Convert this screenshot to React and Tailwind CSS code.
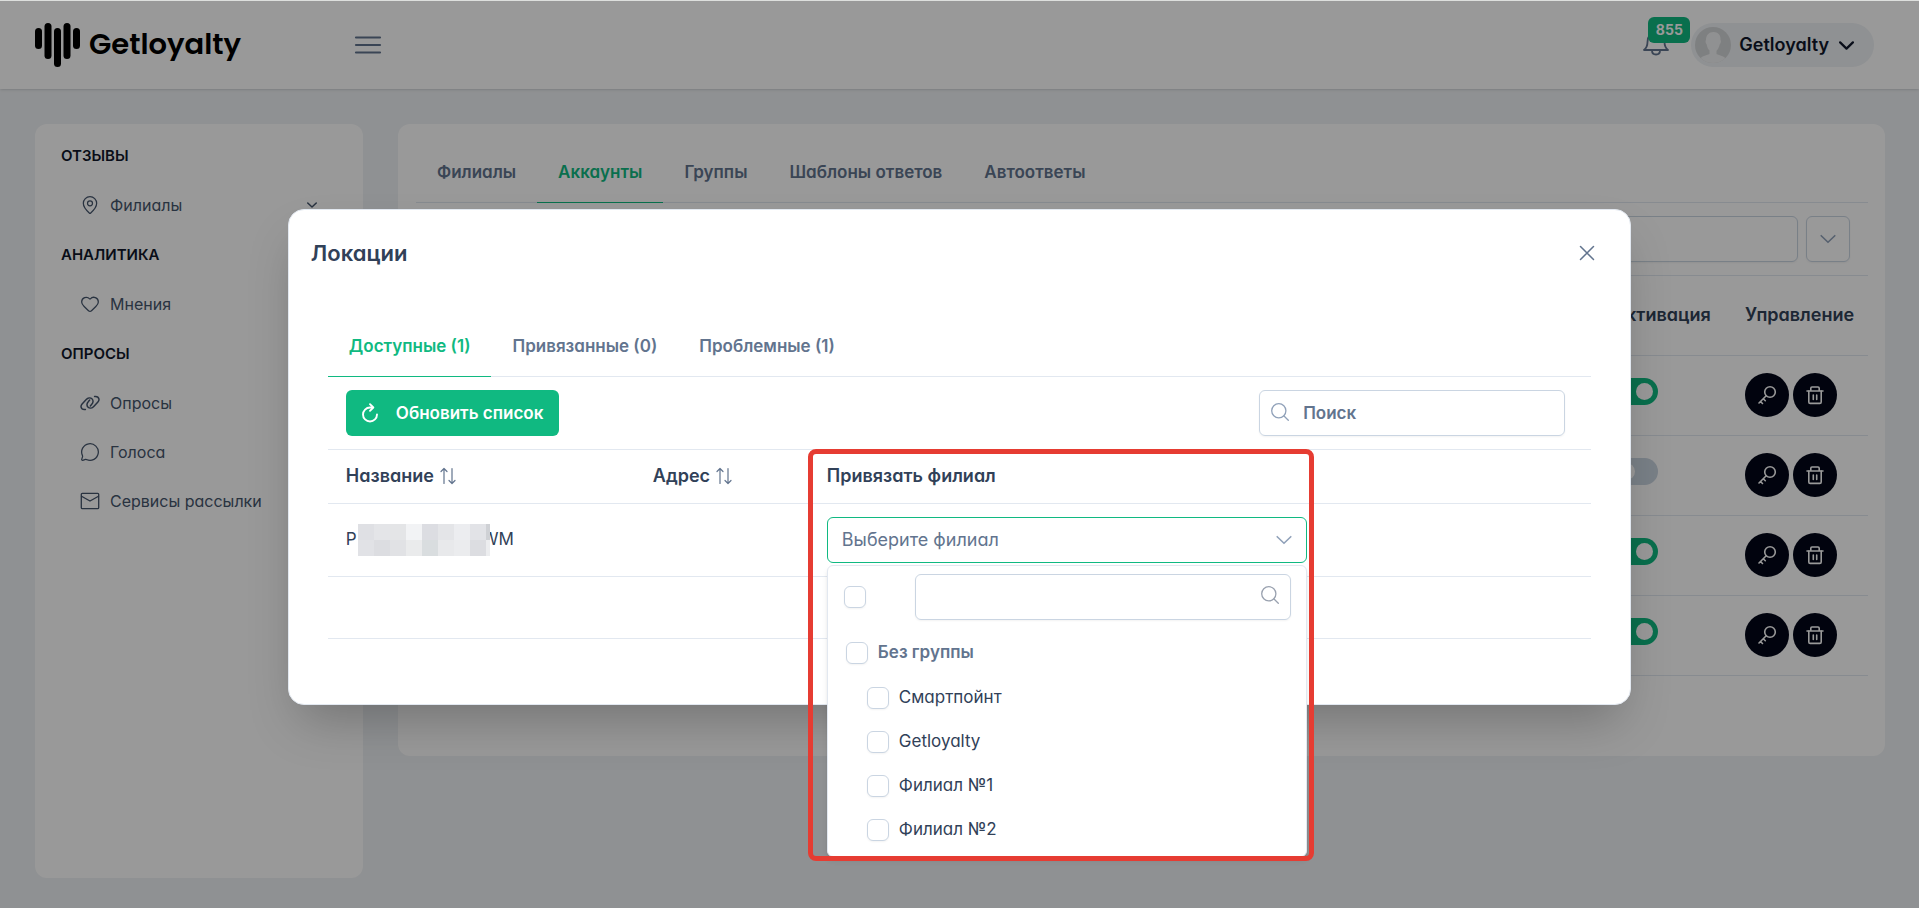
import { useState } from "react";
import { Heart, MapPin, MessageCircle } from "lucide-react";

const LogoIcon = () => (
  <svg width="46" height="46" viewBox="0 0 46 46" fill="currentColor">
    <rect x="0" y="6" width="7" height="21" rx="3.5" />
    <rect x="9.5" y="1" width="7" height="36" rx="3.5" />
    <rect x="19" y="6" width="7" height="39" rx="3.5" />
    <rect x="28.5" y="1" width="7" height="36" rx="3.5" />
    <rect x="38" y="6" width="7" height="21" rx="3.5" />
  </svg>
);

const MenuIcon = () => (
  <svg
    width="28"
    height="20"
    viewBox="0 0 28 20"
    stroke="currentColor"
    strokeWidth="2.2"
    strokeLinecap="round"
  >
    <path d="M2 2.5h24M2 10h24M2 17.5h24" />
  </svg>
);

const BellIcon = () => (
  <svg
    width="26"
    height="28"
    viewBox="0 0 26 28"
    fill="none"
    stroke="currentColor"
    strokeWidth="1.8"
    strokeLinecap="round"
    strokeLinejoin="round"
  >
    <path d="M1 19h24c-2.500-2-3.500-4.500-3.500-8 0-6-3.500-10-8.500-10S4.500 5 4.500 11c0 3.500-1 6-3.500 8z" />
    <path d="M9 19.500c0 2.500 1.700 4 4 4s4-1.500 4-4" />
  </svg>
);

const ChevronIcon = ({ size = 16, strokeWidth = 1.6, className = "" }) => (
  <svg
    width={size}
    height={size}
    viewBox="0 0 16 16"
    fill="none"
    stroke="currentColor"
    strokeWidth={strokeWidth}
    strokeLinecap="round"
    strokeLinejoin="round"
    className={className}
  >
    <path d="M1.200 4.700L8 11.300l6.800-6.600" />
  </svg>
);

const LinkIcon = ({ size = 20 }) => (
  <svg
    width={size}
    height={size}
    viewBox="0 0 24 24"
    fill="none"
    stroke="currentColor"
    strokeWidth="1.8"
    strokeLinecap="round"
    strokeLinejoin="round"
  >
    <path d="M6.500 19.800c-2.300.3-4.700-.8-5.200-2.900-.3-1.400.2-2.600 1.200-3.700l5-5.400c1.900-2 4.900-2.600 6.800-.9s1.700 4.700-.2 6.700l-1.700 1.900" />
    <path d="M17.500 4.200c2.300-.3 4.700.8 5.200 2.900.3 1.400-.2 2.600-1.200 3.700l-5 5.400c-1.900 2-4.900 2.600-6.800.9s-1.700-4.700.2-6.700l1.700-1.900" />
  </svg>
);

const MailIcon = ({ size = 20 }) => (
  <svg
    width={size}
    height={size}
    viewBox="0 0 20 20"
    fill="none"
    stroke="currentColor"
    strokeWidth="1.300"
    strokeLinecap="round"
    strokeLinejoin="round"
  >
    <rect x="1.300" y="2.300" width="17.400" height="15.400" rx="1" />
    <path d="M1.500 5.200L10 10l8.500-4.800" />
  </svg>
);

const SearchIcon = ({ size = 18 }) => (
  <svg
    width={size}
    height={size}
    viewBox="0 0 18 18"
    fill="none"
    stroke="currentColor"
    strokeWidth="1.3"
    strokeLinecap="round"
  >
    <circle cx="7.800" cy="7.800" r="7.100" />
    <path d="M13 13l4.300 4.300" />
  </svg>
);

const RefreshIcon = () => (
  <svg
    width="16"
    height="20"
    viewBox="0 0 16 20"
    fill="none"
    stroke="currentColor"
    strokeWidth="1.900"
    strokeLinecap="round"
    strokeLinejoin="round"
  >
    <path d="M15 11.500A7 7 0 1 1 8 4.500h2.500" />
    <path d="M8 1.200l3.300 3.300L8 7.800" />
  </svg>
);

const SortIcon = () => (
  <svg
    width="16"
    height="18"
    viewBox="0 0 16 18"
    fill="none"
    stroke="currentColor"
    strokeWidth="1.200"
    strokeLinecap="round"
    strokeLinejoin="round"
  >
    <path d="M4 16.500v-15M1 4.500l3-3 3 3" />
    <path d="M12 1.500v15M9 13.500l3 3 3-3" />
  </svg>
);

const CloseIcon = () => (
  <svg
    width="16"
    height="16"
    viewBox="0 0 16 16"
    stroke="currentColor"
    strokeWidth="1.500"
    strokeLinecap="round"
  >
    <path d="M1.500 1.500l13 13M14.500 1.500l-13 13" />
  </svg>
);

const KeyIcon = () => (
  <svg
    width="20"
    height="20"
    viewBox="0 0 20 20"
    fill="none"
    stroke="currentColor"
    strokeWidth="1.600"
    strokeLinecap="round"
    strokeLinejoin="round"
  >
    <circle cx="13" cy="7" r="5.300" />
    <path d="M9.200 10.800L2 18M3.500 16.500l2 2M6.300 13.700l2 2" />
  </svg>
);

const TrashIcon = () => (
  <svg
    width="18"
    height="20"
    viewBox="0 0 18 20"
    fill="none"
    stroke="currentColor"
    strokeWidth="1.600"
    strokeLinecap="round"
    strokeLinejoin="round"
  >
    <path d="M1 6h16M4.800 6V3.200c0-.7.500-1.200 1.200-1.200h6c.7 0 1.200.5 1.200 1.200V6" />
    <path d="M2.800 6v11c0 .8.600 1.400 1.400 1.400h9.600c.8 0 1.400-.6 1.400-1.400V6M7.300 10v4.500M10.700 10v4.500" />
  </svg>
);

const Avatar = () => (
  <svg width="36" height="36" viewBox="0 0 36 36" className="rounded-full">
    <rect width="36" height="36" fill="#d3d5d7" />
    <path
      d="M11 13c0-5 3-8 7.500-8S26 8 25.500 13c.8.500.5 3-.8 4.500-.6 3-1.900 5-3.200 6.300V27c3 1.500 8 2 9.500 5v4H5v-4c1.500-3 6-3.500 9.500-5v-3.500c-1.300-1.300-2.300-3-2.800-6-1.300-1.500-1.500-3.800-.7-4.500z"
      fill="#f1f2f3"
    />
  </svg>
);

const menu = [
  {
    title: "ОТЗЫВЫ",
    items: [{ label: "Филиалы", icon: MapPin, expandable: true }],
  },
  { title: "АНАЛИТИКА", items: [{ label: "Мнения", icon: Heart }] },
  {
    title: "ОПРОСЫ",
    items: [
      { label: "Опросы", icon: LinkIcon },
      { label: "Голоса", icon: MessageCircle },
      { label: "Сервисы рассылки", icon: MailIcon },
    ],
  },
];

const pageTabs = [
  "Филиалы",
  "Аккаунты",
  "Группы",
  "Шаблоны ответов",
  "Автоответы",
];

const modalTabs = ["Доступные (1)", "Привязанные (0)", "Проблемные (1)"];

const branches = ["Смартпойнт", "Getloyalty", "Филиал №1", "Филиал №2"];

// two rows of nine cells, the last one is narrow
const mosaic = [
  "bg-[#dfe0e4]",
  "bg-[#e4e5e8]",
  "bg-[#e4e5e7]",
  "bg-[#f2f3f5]",
  "bg-[#dcdde2]",
  "bg-[#e4e5e8]",
  "bg-[#ecedf0]",
  "bg-[#e2e3e7]",
  "bg-[#cfd1d5]",
  "bg-[#e1e2e6]",
  "bg-[#dcdde1]",
  "bg-[#e1e2e5]",
  "bg-[#eaebec]",
  "bg-[#d9dddf]",
  "bg-[#e8e9eb]",
  "bg-[#ebecee]",
  "bg-[#dcdde1]",
  "bg-[#ecedef]",
];

function Tabs({ tabs, active, onSelect }) {
  return (
    <div role="tablist" className="flex border-b border-slate-200">
      {tabs.map((tab) => (
        <button
          key={tab}
          type="button"
          role="tab"
          aria-selected={tab === active}
          onClick={() => onSelect(tab)}
          className={`-mb-px h-[61px] whitespace-nowrap border-b px-[21px] pt-px text-[17px] font-semibold ${tab === active ? "border-[#10b981] text-[#10b981]" : "border-transparent text-slate-500"}`}
        >
          {tab}
        </button>
      ))}
    </div>
  );
}

function Checkbox({ id, label }) {
  return (
    <input
      id={id}
      type="checkbox"
      aria-label={label}
      className="size-[22px] shrink-0 appearance-none rounded-md border border-slate-300 bg-white shadow-xs checked:border-[#10b981] checked:bg-[#10b981]"
    />
  );
}

function Header() {
  return (
    <header className="flex h-[89px] items-center border-t border-[#dddfdd] bg-white py-4 pl-[35px] pr-[45px] shadow-sm">
      <a href="#" className="flex w-[319px] items-center gap-2 text-black">
        <LogoIcon />
        <span className="font-[Poppins,Inter,sans-serif] text-[29px] font-semibold">
          Getloyalty
        </span>
      </a>
      <button type="button" aria-label="Меню" className="text-slate-500">
        <MenuIcon />
      </button>
      <div className="ml-auto flex items-center">
        <button
          type="button"
          aria-label="Уведомления"
          className="relative mr-[22px] text-slate-500"
        >
          <BellIcon />
          <span className="absolute -top-[14px] left-[5px] flex h-[26px] w-[42px] items-center justify-center rounded-md bg-[#10b981] text-sm font-bold text-white">
            855
          </span>
        </button>
        <button
          type="button"
          className="flex h-11 items-center gap-2 rounded-full bg-[#eff2f5] pl-1 pr-5 font-semibold text-slate-900"
        >
          <Avatar />
          Getloyalty
          <ChevronIcon size={15} strokeWidth={2.4} className="ml-0.5" />
        </button>
      </div>
    </header>
  );
}

function Sidebar() {
  return (
    <aside className="w-[328px] shrink-0 rounded-xl bg-white px-[26px] py-[7px]">
      <nav className="flex flex-col gap-px">
        {menu.map((group) => (
          <div key={group.title}>
            <div className="flex h-[49px] items-center pt-px text-[15px] font-semibold text-slate-900">
              {group.title}
            </div>
            {group.items.map(({ label, icon: Icon, expandable }) => (
              <a
                key={label}
                href="#"
                className="flex h-[49px] items-center gap-2.5 pl-[19px] pr-5 text-base text-slate-600"
              >
                <Icon size={20} strokeWidth={1.5} />
                {label}
                {expandable && (
                  <ChevronIcon size={10} strokeWidth={2.4} className="ml-auto" />
                )}
              </a>
            ))}
          </div>
        ))}
      </nav>
    </aside>
  );
}

function AccountsCard() {
  const [tab, setTab] = useState("Аккаунты");
  const [enabled, setEnabled] = useState([true, false, true, true]);

  const toggle = (index) =>
    setEnabled(enabled.map((on, i) => (i === index ? !on : on)));

  return (
    <main className="min-w-0 flex-1 self-start rounded-xl bg-white pb-20 pl-[18px] pr-[17px] pt-[18px]">
      <Tabs tabs={pageTabs} active={tab} onSelect={setTab} />

      {/* Filters */}
      <div className="flex gap-2 border-b border-slate-200 px-[18px] py-[13px]">
        <input
          type="text"
          aria-label="Фильтр"
          className="h-[46px] flex-1 rounded-md border border-slate-300 px-4 shadow-xs"
        />
        <div className="relative">
          <select
            aria-label="Параметры"
            className="block h-[46px] w-11 appearance-none rounded-md border border-slate-300 shadow-xs"
          />
          <ChevronIcon className="pointer-events-none absolute left-3.5 top-[15px] text-slate-400" />
        </div>
      </div>

      <table className="w-full table-fixed text-left">
        <thead>
          <tr className="h-[79px] border-b border-slate-200 text-slate-700">
            <th></th>
            <th className="w-[132px] pl-[18px] font-semibold">Активация</th>
            <th className="w-[141px] pl-[18px] font-semibold">Управление</th>
          </tr>
        </thead>
        <tbody>
          {enabled.map((on, index) => (
            <tr key={index} className="h-20 border-b border-slate-200">
              <td></td>
              <td className="pb-2 pl-[18px]">
                <input
                  type="checkbox"
                  role="switch"
                  aria-label="Активация"
                  checked={on}
                  onChange={() => toggle(index)}
                  className="block h-[27px] w-[45px] appearance-none rounded-full bg-slate-300 p-[5px] before:block before:size-[17px] before:rounded-full before:bg-white checked:bg-[#10b981] checked:before:ml-[18px]"
                />
              </td>
              <td className="pl-[18px]">
                <div className="flex gap-1 text-white">
                  <button
                    type="button"
                    aria-label="Ключ"
                    className="flex size-11 items-center justify-center rounded-full bg-slate-950"
                  >
                    <KeyIcon />
                  </button>
                  <button
                    type="button"
                    aria-label="Удалить"
                    className="flex size-11 items-center justify-center rounded-full bg-slate-950"
                  >
                    <TrashIcon />
                  </button>
                </div>
              </td>
            </tr>
          ))}
        </tbody>
      </table>
    </main>
  );
}

function BranchSelect() {
  return (
    <div className="relative w-[480px]">
      <select
        aria-label="Привязать филиал"
        className="block h-[46px] w-full appearance-none rounded-md border border-[#10b981] bg-white pl-3.5 text-slate-500"
      >
        <option>Выберите филиал</option>
      </select>
      <ChevronIcon className="pointer-events-none absolute right-[15px] top-[15px] text-slate-400" />

      {/* Dropdown panel */}
      <div className="absolute left-0 top-12 z-10 w-full rounded-md border border-slate-200 bg-white pb-1 shadow-md">
        <div className="flex items-center justify-between py-2 pl-4 pr-[15px]">
          <Checkbox label="Выбрать все" />
          <div className="relative w-[376px]">
            <input
              type="text"
              aria-label="Поиск филиала"
              className="block h-[46px] w-full rounded-md border border-slate-300 pl-3 pr-10 shadow-xs"
            />
            <span className="pointer-events-none absolute right-3 top-3 text-gray-400">
              <SearchIcon />
            </span>
          </div>
        </div>
        <div className="flex h-12 items-center gap-2.5 pl-[18px] pt-0.5 font-semibold text-slate-500">
          <Checkbox id="group" />
          <label htmlFor="group" className="text-[17px]">
            Без группы
          </label>
        </div>
        {branches.map((branch, index) => (
          <div
            key={branch}
            className="flex h-11 items-center gap-2.5 pl-[39px] text-slate-700"
          >
            <Checkbox id={`branch-${index}`} />
            <label htmlFor={`branch-${index}`} className="text-[17px]">
              {branch}
            </label>
          </div>
        ))}
      </div>

      {/* Highlight */}
      <div className="pointer-events-none absolute -left-[19px] -top-[68px] z-20 h-[412px] w-[506px] rounded-lg border-[5px] border-[#e63c32]" />
    </div>
  );
}

function LocationsModal() {
  const [tab, setTab] = useState(modalTabs[0]);

  return (
    <div className="absolute inset-x-0 bottom-0 top-px flex items-start justify-center bg-black/40 pt-52">
      <div
        role="dialog"
        aria-labelledby="modal-title"
        className="w-[70vw] rounded-2xl border border-slate-200 bg-white shadow-2xl"
      >
        <div className="flex items-center justify-between pb-[29px] pl-[22px] pr-[35px] pt-[27px]">
          <h2
            id="modal-title"
            className="text-[22px] font-semibold leading-8 text-slate-700"
          >
            Локации
          </h2>
          <button type="button" aria-label="Закрыть" className="text-slate-500">
            <CloseIcon />
          </button>
        </div>

        <div className="px-[39px] pb-[65px] pt-[18px]">
          <Tabs tabs={modalTabs} active={tab} onSelect={setTab} />

          <div className="flex items-center justify-between border-b border-slate-200 py-[13px] pl-[18px] pr-[26px]">
            <button
              type="button"
              className="flex h-[46px] items-center gap-[18px] rounded-md bg-[#10b981] px-4 text-[17px] font-semibold text-white"
            >
              <RefreshIcon />
              Обновить список
            </button>
            <div className="relative">
              <span className="pointer-events-none absolute left-3 top-[13px] text-slate-400">
                <SearchIcon />
              </span>
              <input
                type="text"
                aria-label="Поиск"
                placeholder="Поиск"
                className="block h-[46px] w-[306px] rounded-md border border-slate-300 pl-[43px] pr-3 text-[17px] font-semibold shadow-xs placeholder:text-slate-500"
              />
            </div>
          </div>

          <table className="w-full table-fixed text-left text-slate-700">
            <thead>
              <tr className="h-[53px] border-b border-slate-200">
                <th className="w-[307px] pl-[18px] font-semibold">
                  <div className="flex items-center gap-1.5">
                    Название
                    <span className="text-slate-500">
                      <SortIcon />
                    </span>
                  </div>
                </th>
                <th className="w-[174px] pl-[18px] font-semibold">
                  <div className="flex items-center gap-1.5">
                    Адрес
                    <span className="text-slate-500">
                      <SortIcon />
                    </span>
                  </div>
                </th>
                <th className="pl-[18px] font-semibold">Привязать филиал</th>
              </tr>
            </thead>
            <tbody>
              <tr className="h-[73px] border-b border-slate-200">
                <td className="pl-[18px]">
                  <div className="flex items-center text-[17px]">
                    P
                    <span className="z-10 -mr-2 ml-px grid grid-cols-[repeat(8,16px)_4px]">
                      {mosaic.map((color, index) => (
                        <span key={index} className={`h-4 ${color}`} />
                      ))}
                    </span>
                    WM
                  </div>
                </td>
                <td></td>
                <td className="pl-[18px]">
                  <BranchSelect />
                </td>
              </tr>
            </tbody>
          </table>
          <div className="h-[62px] border-b border-slate-200" />
        </div>
      </div>
    </div>
  );
}

export default function App() {
  return (
    <div className="relative flex min-h-screen flex-col bg-[#eff2f5] font-[Inter,sans-serif] text-lg [font-feature-settings:'cv11']">
      <Header />
      <div className="flex flex-1 gap-[35px] pb-[30px] pl-[35px] pr-[34px] pt-[35px]">
        <Sidebar />
        <AccountsCard />
      </div>
      <LocationsModal />
    </div>
  );
}
